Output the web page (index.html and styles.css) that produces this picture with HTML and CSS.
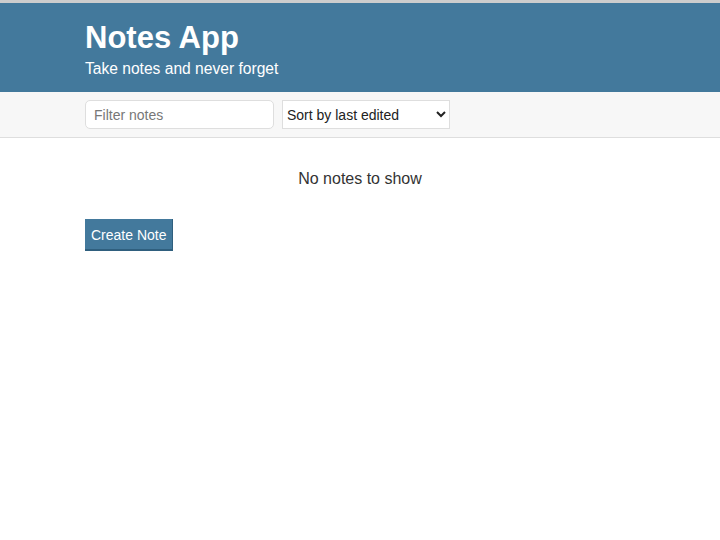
FILE: index.html
```html
<!DOCTYPE html>
<html lang="en">
<head>
    <meta charset="UTF-8">
    <meta name="viewport" content="width=device-width, initial-scale=1.0">
    <title>Notes App</title>
    <link rel="stylesheet" href="styles.css">
</head>
<body>
    <header class="header">
        <div class="container">
            <h1 class="header-title">Notes App</h1>
            <p class="header-subtitle">Take notes and never forget</p>
        </div>
    </header>
    <div class="actions">
        <div class="container actions-row">
            <input id="search-text" class="input" type="text" placeholder="Filter notes">
            <select id="filter-by" class="dropdown">
                <option value="byEdited">Sort by last edited</option>
                <option value="byCreated">Sort by recently created</option>
                <option value="alphabetical">Sort alphabetically</option>
            </select>
        </div>
    </div>
    <div class="container">
        <div id="notes" class="notes">
            <p class="empty-message">No notes to show</p>
        </div>
        <button id="create-note" class="button">Create Note</button>
    </div>
</body>
</html>
```

FILE: styles.css
```css
* {
    box-sizing: border-box;
}
html {
    border-top: 3px solid #cdcdcd;
}
body {
    margin: 0;
    font-family: "Liberation Sans", Arial, sans-serif;
    color: #333333;
    background-color: #ffffff;
}
.container {
    max-width: 550px;
    margin: 0 auto;
}
.header {
    background-color: #43799c;
    color: white;
    padding: 16px 0 14px;
}
.header-title {
    font-size: 31px;
    line-height: 38px;
    margin: 0 0 2px;
}
.header-subtitle {
    font-size: 15.6px;
    line-height: 19px;
    margin: 0;
}
.actions {
    background-color: #f7f7f7;
    border-bottom: 1px solid #dedede;
    padding: 8px 0;
}
.actions-row {
    display: flex;
    align-items: center;
}
.input {
    width: 189px;
    height: 29px;
    border: 1px solid #dedede;
    border-radius: 5px;
    padding: 0 8px;
    font-family: inherit;
    font-size: 14px;
    color: #333333;
    background: white;
    margin-right: 8px;
}
.input::placeholder {
    color: #777777;
}
.dropdown {
    width: 168px;
    height: 29px;
    border: 1px solid #dedede;
    border-radius: 0;
    padding: 0;
    font-family: inherit;
    font-size: 14px;
    color: #222222;
    background: white;
}
.notes {
    padding-top: 32px;
}
.empty-message {
    text-align: center;
    font-size: 16px;
    margin: 0 0 31px;
    color: #333333;
}
.button {
    background-color: #43799c;
    border: none;
    border-bottom: 2px solid #2f5f7e;
    border-right: 1px solid #2f5f7e;
    color: white;
    font-family: inherit;
    font-size: 14px;
    padding: 8px 6px 6px;
    cursor: pointer;
}
```
